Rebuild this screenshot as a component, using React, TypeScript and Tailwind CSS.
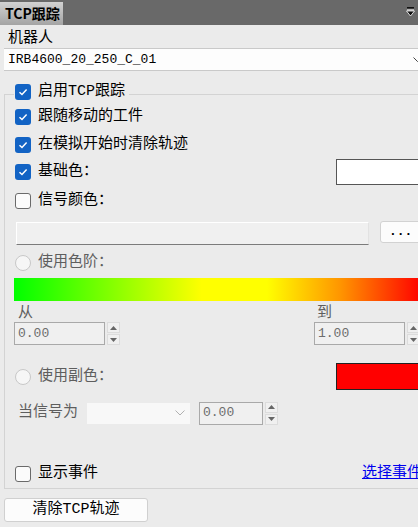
import React from "react";

// font stacks
const mono = "font-['Liberation_Mono','Noto_Sans_CJK_SC',monospace]";

const CheckBox = ({ checked }: { checked?: boolean }) =>
  checked ? (
    <div className="w-4 h-4 shrink-0 rounded-[3px] bg-[#1263c4] flex items-center justify-center">
      <svg width="10" height="8" viewBox="0 0 10 8">
        <path d="M1.5 4.2 L4 6.5 L8.6 1.6" fill="none" stroke="white" strokeWidth="1.5" />
      </svg>
    </div>
  ) : (
    <div className="w-4 h-4 shrink-0 rounded-[3px] border border-[#6a6a6a] bg-[#fbfbfb]" />
  );

const Radio = () => (
  <div className="w-4 h-4 shrink-0 rounded-full border border-[#c8c8c8] bg-[#f6f6f6]" />
);

const Spinner = ({ value, width }: { value: string; width: string }) => (
  <div className="flex h-[23px]">
    <div
      className={`${width} h-full bg-[#f0f0f0] border border-[#a9a9a9] flex items-center pl-[3px] text-[13px] text-[#6d6d6d] ${mono}`}
    >
      {value}
    </div>
    <div className="ml-[2px] flex flex-col gap-[1px]">
      <div className="w-[13px] h-[11px] bg-[#f0f0f0] border border-[#dcdcdc] flex items-center justify-center">
        <svg width="7" height="4" viewBox="0 0 7 4">
          <path d="M0 4 L3.5 0 L7 4 Z" fill="#666" />
        </svg>
      </div>
      <div className="w-[13px] h-[11px] bg-[#f0f0f0] border border-[#dcdcdc] flex items-center justify-center">
        <svg width="7" height="4" viewBox="0 0 7 4">
          <path d="M0 0 L7 0 L3.5 4 Z" fill="#666" />
        </svg>
      </div>
    </div>
  </div>
);

export default function App() {
  return (
    <div className={`w-[418px] h-[527px] overflow-hidden bg-[#ebebeb] text-black ${mono}`}>
      {/* title bar */}
      <div className="h-[25px] bg-[#696969] flex items-end justify-between">
        <div className="w-[63px] h-[23px] bg-gradient-to-b from-[#d2d2d2] to-[#a4a4a4] pl-[5px] flex items-center text-[14px] font-bold font-['Noto_Sans_CJK_SC',sans-serif]">
          TCP跟踪
        </div>
        <svg width="9" height="10" viewBox="0 0 9 10" className="mr-[3px] mb-[8px]">
          <rect x="1" y="0" width="7" height="1.5" fill="#111" />
          <rect x="1" y="2.5" width="7" height="1" fill="#fff" />
          <path d="M0.5 4 L8.5 4 L4.5 9 Z" fill="#111" stroke="#fff" strokeWidth="0.8" />
        </svg>
      </div>

      <div className="w-[430px]">
        <div className="pl-2 pt-[5px] h-[23px] text-[15px] leading-[18px]">机器人</div>

        <div className="ml-[4px] h-[23px] bg-[#fdfdfd] border-y border-[#c9c9c9] flex items-center justify-between pl-1 pr-2">
          <span className="text-[13px] leading-[16px]">IRB4600_20_250_C_01</span>
          <svg width="9" height="6" viewBox="0 0 9 6">
            <path d="M0.5 0.5 L4.5 4.5 L8.5 0.5" fill="none" stroke="#444" strokeWidth="1" />
          </svg>
        </div>

        {/* group box */}
        <div className="ml-[4px] mt-[23px] border border-[#d3d3d3] pr-[7px] pb-[6px] text-[15px] leading-[18px]">
          <div className="-mt-[11px] ml-[9px] h-4 w-fit flex items-center gap-[7px] bg-[#ebebeb] pl-[1px] pr-[4px]">
            <CheckBox checked />
            <span>启用TCP跟踪</span>
          </div>

          <div className="mt-[9px] pl-[10px] h-4 flex items-center gap-[7px]">
            <CheckBox checked />
            <span>跟随移动的工件</span>
          </div>
          <div className="mt-[12px] pl-[10px] h-4 flex items-center gap-[7px]">
            <CheckBox checked />
            <span>在模拟开始时清除轨迹</span>
          </div>
          <div className="mt-[6px] pl-[10px] h-[26px] flex items-center justify-between">
            <div className="flex items-center gap-[7px]">
              <CheckBox checked />
              <span>基础色：</span>
            </div>
            <div className="w-[86px] h-[26px] bg-white border border-[#555]" />
          </div>
          <div className="mt-[8px] pl-[10px] h-4 flex items-center gap-[7px]">
            <CheckBox />
            <span>信号颜色：</span>
          </div>

          <div className="mt-[13px] pl-[11px] h-[23px] flex items-start justify-between">
            <div className="w-[353px] h-[23px] bg-[#f0f0f0] border border-[#e2e2e2] border-t-white border-l-white border-b-[#7b7b7b]" />
            <div className="w-[42px] h-[22px] -mt-[1px] bg-[#fcfcfc] border border-[#d2d2d2] rounded-[3px] pl-[8px] flex items-center text-[13px] font-bold">
              ...
            </div>
          </div>

          <div className="mt-[10px] pl-[10px] h-4 flex items-center gap-[7px] text-[#5e5e5e]">
            <Radio />
            <span>使用色阶：</span>
          </div>

          <div className="mt-[7px] ml-[9px] h-[23px] bg-[linear-gradient(to_right,#00ff00_0%,#ffff00_46%,#ffff00_62%,#ff9500_80%,#ff0000_100%)]" />

          <div className="ml-[9px] flex text-[#5e5e5e]">
            <div>
              <div className="h-[21px] pt-[4px] pl-[4px] leading-[17px]">从</div>
              <Spinner value="0.00" width="w-[91px]" />
            </div>
            <div className="ml-[194px]">
              <div className="h-[21px] pt-[4px] pl-[3px] leading-[17px]">到</div>
              <Spinner value="1.00" width="w-[91px]" />
            </div>
          </div>

          <div className="mt-[18px] pl-[10px] h-[27px] flex items-center justify-between">
            <div className="flex items-center gap-[7px] text-[#5e5e5e]">
              <Radio />
              <span>使用副色：</span>
            </div>
            <div className="w-[86px] h-[27px] bg-[#ff0000] border border-[#222]" />
          </div>

          <div className="mt-[11px] pl-[13px] h-[24px] flex items-center text-[#5e5e5e]">
            <span className="w-[69px]">当信号为</span>
            <div className="w-[103px] h-[21px] bg-[#f8f8f8] flex items-center justify-end pr-[5px]">
              <svg width="10" height="6" viewBox="0 0 10 6">
                <path d="M0.5 0.5 L5 5 L9.5 0.5" fill="none" stroke="#b0b0b0" strokeWidth="1" />
              </svg>
            </div>
            <div className="ml-[9px]">
              <Spinner value="0.00" width="w-[64px]" />
            </div>
          </div>

          <div className="mt-[41px] pl-[10px] h-4 flex items-center justify-between">
            <div className="flex items-center gap-[7px]">
              <CheckBox />
              <span>显示事件</span>
            </div>
            <span className="text-[#0000ee] underline">选择事件</span>
          </div>
        </div>

        <button className="mt-[9px] ml-[4px] w-[144px] h-[24px] bg-[#fcfcfc] border border-[#d0d0d0] rounded-[3px] text-[15px] leading-[18px] flex items-center justify-center">
          清除TCP轨迹
        </button>
      </div>
    </div>
  );
}
